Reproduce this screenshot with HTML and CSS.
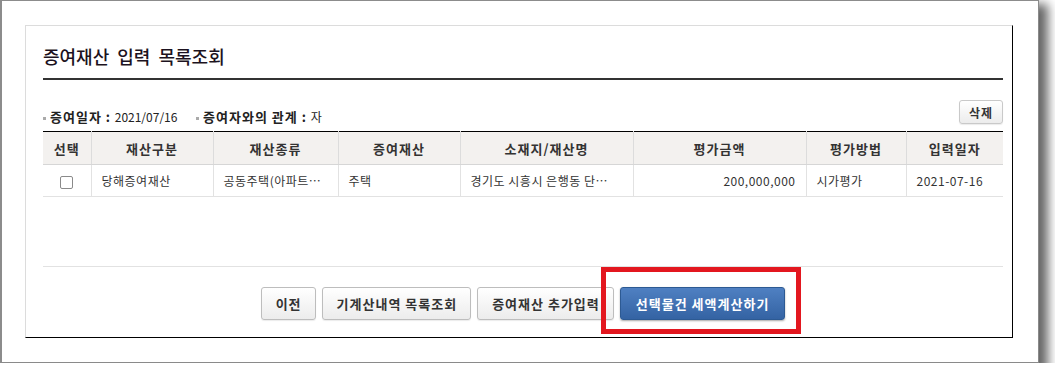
FILE: index.html
```html
<!DOCTYPE html>
<html>
<head>
    <meta charset="utf-8">
    <title>증여재산 입력 목록조회</title>
    <link rel="stylesheet" href="styles.css">
</head>
<body>
    <div class="window">
        <div class="panel">
            <h2 class="title">증여재산 입력 목록조회</h2>

            <div class="info-row">
                <div class="info">
                    <span class="bullet"></span><b>증여일자 :</b> 2021/07/16
                    <span class="bullet second"></span><b>증여자와의 관계 :</b> 자
                </div>
                <button class="btn small">삭제</button>
            </div>

            <table class="list">
                <colgroup>
                    <col style="width: 48px">
                    <col style="width: 122px">
                    <col style="width: 125px">
                    <col style="width: 122px">
                    <col style="width: 173px">
                    <col style="width: 173px">
                    <col style="width: 100px">
                    <col>
                </colgroup>
                <thead>
                    <tr>
                        <th>선택</th>
                        <th>재산구분</th>
                        <th>재산종류</th>
                        <th>증여재산</th>
                        <th>소재지/재산명</th>
                        <th>평가금액</th>
                        <th>평가방법</th>
                        <th>입력일자</th>
                    </tr>
                </thead>
                <tbody>
                    <tr>
                        <td class="center"><span class="check"></span></td>
                        <td>당해증여재산</td>
                        <td>공동주택(아파트…</td>
                        <td>주택</td>
                        <td>경기도 시흥시 은행동 단…</td>
                        <td class="right">200,000,000</td>
                        <td>시가평가</td>
                        <td>2021-07-16</td>
                    </tr>
                </tbody>
            </table>

            <div class="footer">
                <button class="btn">이전</button>
                <button class="btn">기계산내역 목록조회</button>
                <button class="btn">증여재산 추가입력</button>
                <span class="mark">
                    <button class="btn primary">선택물건 세액계산하기</button>
                </span>
            </div>
        </div>
    </div>
</body>
</html>
```

FILE: styles.css
```css
body {
    margin: 0;
    background: #fff;
    font-family: "Noto Sans CJK KR", "Noto Sans", sans-serif;
    color: #333;
}
.window {
    box-sizing: border-box;
    width: 1039px;
    height: 363px;
    background: #fff;
    border-top: 1px solid #8c8c8c;
    border-left: 2px solid #8c8c8c;
    border-right: 1px solid #8a8a8a;
    border-bottom: 1px solid #8a8a8a;
    box-shadow: 6px 7px 10px 3px rgba(0,0,0,0.6);
    padding: 24px 0 0 23px;
}
.panel {
    box-sizing: border-box;
    width: 988px;
    height: 313px;
    border-top: 1px solid #dcdcdc;
    border-left: 1px solid #dcdcdc;
    border-right: 1px solid #000;
    border-bottom: 1px solid #000;
    padding: 0 9px 0 17px;
    display: flex;
    flex-direction: column;
}
.title {
    margin: 0;
    padding: 17px 0 9px;
    line-height: 26px;
    font-size: 18px;
    font-weight: 500;
    color: #1c1220;
    word-spacing: 4px;
    border-bottom: 2px solid #333;
}
.info-row {
    display: flex;
    justify-content: space-between;
    align-items: flex-end;
    margin: 20px 0 7px;
}
.info {
    font-size: 12px;
    line-height: 14px;
    color: #222;
}
.info b {
    font-size: 13px;
    font-weight: bold;
    letter-spacing: 1px;
    margin-right: 1px;
}
.bullet {
    display: inline-block;
    width: 3px;
    height: 3px;
    background: #aaa;
    vertical-align: middle;
    margin-right: 4px;
}
.bullet.second {
    margin-left: 16px;
}
.btn {
    font-family: inherit;
    font-size: 13px;
    font-weight: bold;
    letter-spacing: 1px;
    color: #333;
    height: 33px;
    padding: 0 13px 0 14px;
    border: 1px solid #bdbdbd;
    border-radius: 3px;
    background: linear-gradient(#ffffff, #ececec);
    box-shadow: 0 1px 1px rgba(0,0,0,0.08);
    cursor: pointer;
}
.btn.small {
    height: 24px;
    padding: 0 9px;
    font-size: 12px;
    letter-spacing: 1px;
    border-color: #c9c9c9;
}
.btn.primary {
    color: #fff;
    border: 1px solid #2d5a93;
    background: linear-gradient(#4f80c2, #3463a3);
    padding: 0 15px;
    box-shadow: 0 1px 2px rgba(0,0,0,0.35);
}
.list {
    width: 960px;
    border-collapse: collapse;
    table-layout: fixed;
    border-top: 1px solid #000;
    font-size: 12px;
}
.list th {
    height: 32px;
    padding: 0;
    background: #f3f1ef;
    font-size: 13px;
    font-weight: bold;
    letter-spacing: 1px;
    color: #333;
    border-left: 1px solid #dcdcdc;
    border-bottom: 1px solid #d6d6d6;
}
.list td {
    height: 31px;
    padding: 0 10px;
    color: #333;
    letter-spacing: 0.5px;
    white-space: nowrap;
    overflow: hidden;
    border-left: 1px solid #e2e2e2;
    border-bottom: 1px solid #e2e2e2;
}
.list th:first-child,
.list td:first-child {
    border-left: none;
}
.list td.center {
    text-align: center;
    padding: 0;
}
.list td.right {
    text-align: right;
}
.check {
    display: inline-block;
    width: 11px;
    height: 11px;
    border: 1px solid #8a8a8a;
    border-radius: 2px;
    background: #fff;
    vertical-align: middle;
}
.footer {
    margin-top: auto;
    border-top: 1px solid #e2e2e2;
    padding: 20px 0 17px;
    display: flex;
    justify-content: center;
    gap: 6px;
}
.mark {
    position: relative;
    display: inline-block;
}
.mark::after {
    content: "";
    position: absolute;
    left: -19px;
    right: -16px;
    top: -20px;
    bottom: -14px;
    border: 5px solid #e3171f;
}
```
